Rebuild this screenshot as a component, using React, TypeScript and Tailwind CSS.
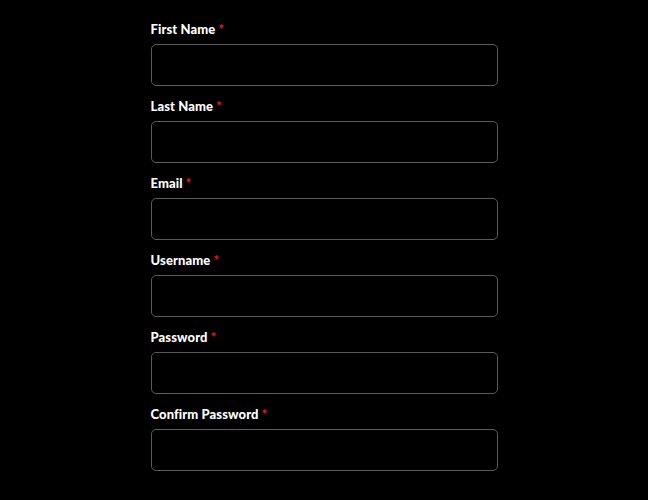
const fields = [
  "First Name",
  "Last Name",
  "Email",
  "Username",
  "Password",
  "Confirm Password",
];

export default function App() {
  return (
    <div className="min-h-[500px] w-full bg-black pt-[20px] font-['Lato',sans-serif]">
      <form className="mx-auto flex w-[347px] flex-col gap-[11px]">
        {fields.map((f) => (
          <div key={f} className="flex flex-col gap-[6px]">
            <label className="h-[18px] text-[13px] font-black leading-[18px] tracking-[0.1px] text-white">
              {f} <span className="text-[#e01b1b]">*</span>
            </label>
            <input
              type={f.includes("Password") ? "password" : "text"}
              className="h-[42px] w-full rounded-[5px] border border-[#5a5a5a] bg-black px-3 text-sm text-white outline-none"
            />
          </div>
        ))}
      </form>
    </div>
  );
}
